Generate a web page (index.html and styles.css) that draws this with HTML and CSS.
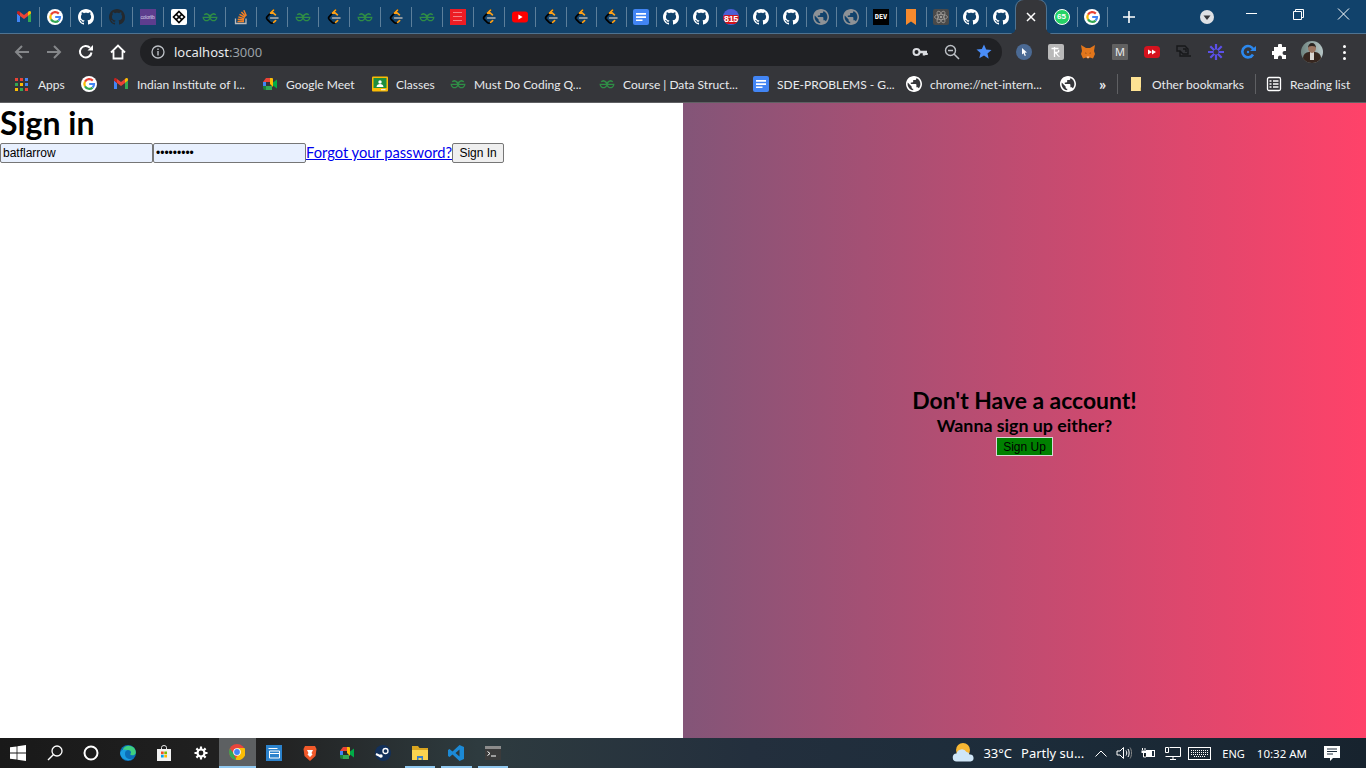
FILE: index.html
```html
<!DOCTYPE html>
<html lang="en">
<head>
<meta charset="utf-8">
<title>localhost:3000</title>
<link rel="stylesheet" href="styles.css">
</head>
<body>
<svg class="defs" width="0" height="0">
  <symbol id="gh" viewBox="0 0 16 16"><path fill="#fff" d="M8 0C3.58 0 0 3.58 0 8c0 3.54 2.29 6.53 5.47 7.59.4.07.55-.17.55-.38 0-.19-.01-.82-.01-1.49-2.01.37-2.53-.49-2.69-.94-.09-.23-.48-.94-.82-1.13-.28-.15-.68-.52-.01-.53.63-.01 1.08.58 1.23.82.72 1.21 1.87.87 2.33.66.07-.52.28-.87.51-1.07-1.78-.2-3.64-.89-3.64-3.95 0-.87.31-1.59.82-2.15-.08-.2-.36-1.02.08-2.12 0 0 .67-.21 2.2.82.64-.18 1.32-.27 2-.27s1.36.09 2 .27c1.53-1.04 2.2-.82 2.2-.82.44 1.1.16 1.92.08 2.12.51.56.82 1.27.82 2.15 0 3.07-1.87 3.75-3.65 3.95.29.25.54.73.54 1.48 0 1.07-.01 1.93-.01 2.2 0 .21.15.46.55.38A8.01 8.01 0 0 0 16 8c0-4.42-3.58-8-8-8z"/></symbol>
  <symbol id="ghd" viewBox="0 0 16 16"><path fill="#24292e" d="M8 0C3.58 0 0 3.58 0 8c0 3.54 2.29 6.53 5.47 7.59.4.07.55-.17.55-.38 0-.19-.01-.82-.01-1.49-2.01.37-2.53-.49-2.69-.94-.09-.23-.48-.94-.82-1.13-.28-.15-.68-.52-.01-.53.63-.01 1.08.58 1.23.82.72 1.21 1.87.87 2.33.66.07-.52.28-.87.51-1.07-1.78-.2-3.64-.89-3.64-3.95 0-.87.31-1.59.82-2.15-.08-.2-.36-1.02.08-2.12 0 0 .67-.21 2.2.82.64-.18 1.32-.27 2-.27s1.36.09 2 .27c1.53-1.04 2.2-.82 2.2-.82.44 1.1.16 1.92.08 2.12.51.56.82 1.27.82 2.15 0 3.07-1.87 3.75-3.65 3.95.29.25.54.73.54 1.48 0 1.07-.01 1.93-.01 2.2 0 .21.15.46.55.38A8.01 8.01 0 0 0 16 8c0-4.42-3.58-8-8-8z"/></symbol>
  <symbol id="g" viewBox="0 0 16 16"><circle cx="8" cy="8" r="8" fill="#fff"/><path fill="none" stroke="#ea4335" stroke-width="2.2" d="M11.8 4.6A5 5 0 0 0 4 5.6"/><path fill="none" stroke="#fbbc05" stroke-width="2.2" d="M4 5.6a5 5 0 0 0 0 4.8"/><path fill="none" stroke="#34a853" stroke-width="2.2" d="M4 10.4a5 5 0 0 0 7.6 1.2"/><path fill="none" stroke="#4285f4" stroke-width="2.2" d="M11.6 11.6A5 5 0 0 0 13 8H8.2"/></symbol>
  <symbol id="gm" viewBox="0 0 16 16"><path fill="#4285f4" d="M1 13h3V7L1 4.5z"/><path fill="#34a853" d="M12 13h3V4.5L12 7z"/><path fill="#ea4335" d="M4 7V3l4 3 4-3v4L8 10z"/><path fill="#fbbc05" d="M12 3v4l3-2.500V3.500C15 2 13.200 1.400 12 3z"/><path fill="#c5221f" d="M4 3v4L1 4.500V3.500C1 2 2.800 1.400 4 3z"/></symbol>
  <symbol id="gfg" viewBox="0 0 16 16"><path fill="none" stroke="#2f8d46" stroke-width="1.300" d="M8 8.300H14.800A3.400 3.400 0 1 1 13.800 5.900M8 8.300H1.200A3.400 3.400 0 1 0 2.200 5.900M7.900 8.300C7 5 3.800 4.200 2.200 5.900M8.100 8.300C9 5 12.200 4.200 13.800 5.900"/></symbol>
  <symbol id="lc" viewBox="0 0 16 16"><path fill="none" stroke="#000" stroke-width="1.700" stroke-linecap="round" d="M9.500 1.200 3.200 7.600a2 2 0 0 0 0 2.700l3 3a2.500 2.500 0 0 0 3.400 0"/><path fill="none" stroke="#ffa116" stroke-width="1.700" stroke-linecap="round" d="M9.600 13.300l2-1.700M9.500 1.200l-3 3M6.500 4.200l2.600-.4 2.300 2"/><path stroke="#b3b3b3" stroke-width="1.500" stroke-linecap="round" d="M6.500 8.900H14"/></symbol>
  <symbol id="globe" viewBox="2 2 20 20"><path fill="currentColor" fill-rule="evenodd" d="M12 2C6.48 2 2 6.48 2 12s4.48 10 10 10 10-4.48 10-10S17.52 2 12 2zm-1 17.93c-3.95-.49-7-3.85-7-7.930 0-.62.08-1.210.21-1.790L9 15v1c0 1.100.9 2 2 2v1.930zm6.900-2.540c-.26-.81-1-1.390-1.900-1.390h-1v-3c0-.55-.45-1-1-1H8v-2h2c.55 0 1-.45 1-1V7h2c1.100 0 2-.9 2-2v-.41c2.930 1.190 5 4.060 5 7.410 0 2.080-.8 3.970-2.100 5.390z"/></symbol>
  <symbol id="docs" viewBox="0 0 16 16"><rect width="16" height="16" rx="2" fill="#4285f4"/><path fill="#fff" d="M3 4h10v1.700H3zM3 7.200h10v1.700H3zM3 10.400h6.500v1.700H3z"/></symbol>
</svg>

<div class="tabstrip">
  <div class="tab first"><svg class="fav"><use href="#gm"/></svg></div>
  <div class="tab"><svg class="fav"><use href="#g"/></svg></div>
  <div class="tab"><svg class="fav"><use href="#gh"/></svg></div>
  <div class="tab"><svg class="fav"><use href="#ghd"/></svg></div>
  <div class="tab"><div class="fav colorlib">colorlib</div></div>
  <div class="tab"><div class="fav codepen"><svg viewBox="0 0 16 16"><path fill="none" stroke="#000" stroke-width="1.600" d="M8 2.500 13.500 8 8 13.500 2.500 8zM5 5.200 11 10.800M11 5.200 5 10.800"/></svg></div></div>
  <div class="tab"><svg class="fav"><use href="#gfg"/></svg></div>
  <div class="tab"><svg class="fav" viewBox="0 0 16 16"><path fill="none" stroke="#bcbbbb" stroke-width="1.300" d="M2.500 9.500V14.500H13V9.500"/><path stroke="#f48024" stroke-width="1.500" d="M4.500 12.600h6.500M4.700 10.300l6.300.7M5.300 7.900l6 1.800M6.500 5.300l5.500 3M8.400 3l4.200 4.500M10.800 1.200l2.500 5.600"/></svg></div>
  <div class="tab"><svg class="fav"><use href="#lc"/></svg></div>
  <div class="tab"><svg class="fav"><use href="#gfg"/></svg></div>
  <div class="tab"><svg class="fav"><use href="#lc"/></svg></div>
  <div class="tab"><svg class="fav"><use href="#gfg"/></svg></div>
  <div class="tab"><svg class="fav"><use href="#lc"/></svg></div>
  <div class="tab"><svg class="fav"><use href="#gfg"/></svg></div>
  <div class="tab"><div class="fav redbook"><span></span><span></span><span></span></div></div>
  <div class="tab"><svg class="fav"><use href="#lc"/></svg></div>
  <div class="tab"><svg class="fav" viewBox="0 0 16 16"><rect y="2.500" width="16" height="11" rx="3" fill="#f00"/><path fill="#fff" d="M6.400 5.600 10.600 8 6.400 10.400z"/></svg></div>
  <div class="tab"><svg class="fav"><use href="#lc"/></svg></div>
  <div class="tab nr"><svg class="fav"><use href="#lc"/></svg></div>
  <div class="tab nr"><svg class="fav"><use href="#lc"/></svg></div>
  <div class="tab nr"><svg class="fav"><use href="#docs"/></svg></div>
  <div class="tab nr"><svg class="fav"><use href="#gh"/></svg></div>
  <div class="tab nr"><svg class="fav"><use href="#gh"/></svg></div>
  <div class="tab nr"><div class="fav badge"><b>815</b></div></div>
  <div class="tab nr"><svg class="fav"><use href="#gh"/></svg></div>
  <div class="tab nr"><svg class="fav"><use href="#gh"/></svg></div>
  <div class="tab nr"><svg class="fav grey"><use href="#globe"/></svg></div>
  <div class="tab nr"><svg class="fav grey"><use href="#globe"/></svg></div>
  <div class="tab nr"><div class="fav dev">DEV</div></div>
  <div class="tab nr"><svg class="fav" viewBox="0 0 16 16"><path fill="#f58a2e" d="M3 0h10v16l-5-3.500L3 16z"/></svg></div>
  <div class="tab nr"><div class="fav react"><svg viewBox="0 0 16 16"><g fill="none" stroke="#a09c98" stroke-width=".8"><ellipse cx="8" cy="8" rx="6.500" ry="2.600"/><ellipse cx="8" cy="8" rx="6.500" ry="2.600" transform="rotate(60 8 8)"/><ellipse cx="8" cy="8" rx="6.500" ry="2.600" transform="rotate(120 8 8)"/></g><circle cx="8" cy="8" r="1.300" fill="#a09c98"/></svg></div></div>
  <div class="tab nr"><svg class="fav"><use href="#gh"/></svg></div>
  <div class="tab nr last"><svg class="fav"><use href="#gh"/></svg></div>
  <div class="tab active"><svg class="close" viewBox="0 0 10 10"><path stroke="#fff" stroke-width="1.500" d="M1 1l8 8M9 1l-8 8"/></svg></div>
  <div class="tab wa"><div class="fav whatsapp"><b>65</b></div></div>
  <div class="tab nr wide"><svg class="fav"><use href="#g"/></svg></div>
  <svg class="newtab" viewBox="0 0 12 12"><path stroke="#fff" stroke-width="1.600" d="M6 0v12M0 6h12"/></svg>
  <div class="search-tabs"><svg viewBox="0 0 14 14"><circle cx="7" cy="7" r="7" fill="#dfe1e5"/><path fill="#35363a" d="M3.500 5.500h7L7 10z"/></svg></div>
  <div class="winctl">
    <svg viewBox="0 0 46 20"><path stroke="#fff" d="M18 9.500h11"/></svg>
    <svg viewBox="0 0 46 20"><path fill="none" stroke="#fff" d="M19.500 7.500h8v8h-8zM21.500 7.500v-2h8v8h-2"/></svg>
    <svg viewBox="0 0 46 20"><path stroke="#fff" d="M18 4.500l11 11M29 4.500l-11 11"/></svg>
  </div>
</div>

<div class="toolbar">
  <svg class="nav" viewBox="0 0 16 16"><path fill="none" stroke="#85878a" stroke-width="2" d="M15 8H2M8 2 2 8l6 6"/></svg>
  <svg class="nav" viewBox="0 0 16 16"><path fill="none" stroke="#85878a" stroke-width="2" d="M1 8h13M8 2l6 6-6 6"/></svg>
  <svg class="nav" viewBox="0 0 16 16"><path fill="none" stroke="#fff" stroke-width="2" d="M13.500 8.500A5.800 5.800 0 1 1 12 3.800"/><path fill="#fff" d="M9.500 6.500H15V1z"/></svg>
  <svg class="nav" viewBox="0 0 16 16"><path fill="none" stroke="#fff" stroke-width="1.800" d="M1 8.500 8 1.500l7 7M3.500 7v7.500h9V7"/></svg>
  <div class="omnibox">
    <svg class="info" viewBox="0 0 14 14"><circle cx="7" cy="7" r="6" fill="none" stroke="#bdc1c6" stroke-width="1.300"/><path stroke="#bdc1c6" stroke-width="1.400" d="M7 6v4.500M7 3.500V5"/></svg>
    <span class="url">localhost<span class="port">:3000</span></span>
    <div class="omni-right">
      <svg viewBox="0 0 16 16"><circle cx="4.500" cy="8" r="3" fill="none" stroke="#dadce0" stroke-width="2"/><path stroke="#dadce0" stroke-width="2.500" d="M7 8h8M12 9v2.500M14.500 9v2"/></svg>
      <svg viewBox="0 0 16 16"><circle cx="6.500" cy="6.500" r="5" fill="none" stroke="#bdc1c6" stroke-width="1.400"/><path stroke="#bdc1c6" stroke-width="1.500" d="M10 10l5 5M4 6.500h5"/></svg>
      <svg viewBox="0 0 16 16"><path fill="#4a8df8" d="M8 .5l2.200 5 5.300.5-4 3.500 1.200 5.300L8 11.500l-4.700 2.800 1.200-5.300-4-3.500 5.300-.5z"/></svg>
    </div>
  </div>
  <div class="exts">
    <svg viewBox="0 0 16 16"><circle cx="8" cy="8" r="8" fill="#4b6a94"/><path fill="#fff" d="M6 4l5 4.500-2.300.3 1.200 2.600-1.200.5-1.100-2.600L6 10.500z"/></svg>
    <svg viewBox="0 0 16 16"><rect width="16" height="16" rx="2" fill="#b9b9b9"/><path fill="none" stroke="#fff" stroke-width="1.300" d="M3.500 4.500h7M6.500 3v10M6.500 8.500c3 0 5-.5 4-2.500M7 8.500c2 0 2.500 4.500 4.500 3.800"/></svg>
    <svg viewBox="0 0 16 16"><path fill="#e2761b" d="M1 1l5 3h4l5-3-1 6 1 3-2 4.500-3-1-2 1-2-1-3 1L1 10l1-3z"/><path fill="#763d16" d="M5 8.500l1.500.5L6 10zM11 8.500 9.500 9l.5 1z"/><path fill="#f6c7a1" d="M6.500 12.500h3L8 14.500z"/></svg>
    <div class="ext-m">M</div>
    <svg viewBox="0 0 16 16"><rect y="2" width="16" height="12" rx="3.500" fill="#d5121e"/><path fill="#fff" d="M4 5.500 8 8l-4 2.500zM8 5.500 12 8l-4 2.500z"/></svg>
    <svg viewBox="0 0 16 16"><g fill="none" stroke="#17181a" stroke-width="1.400"><path d="M1 2h8l3 3v5H7L4 7H1zM4 7v5h11"/><path d="M7 5h3v3"/></g></svg>
    <svg viewBox="0 0 16 16"><g stroke="#5b50e8" stroke-width="2.200"><path d="M8 0v16M0 8h16M2.300 2.300l11.400 11.400M13.700 2.300 2.300 13.700"/></g><circle cx="8" cy="8" r="2.500" fill="#35363a"/></svg>
    <svg viewBox="0 0 16 16"><path fill="none" stroke="#2c88ed" stroke-width="2.600" d="M13 10.500A5.700 5.700 0 1 1 13.500 6"/><path fill="#2c88ed" d="M10 7H16V2z"/><circle cx="8" cy="8" r="1.200" fill="#2c88ed"/></svg>
    <svg viewBox="0 0 16 16"><path fill="#fff" d="M6 1.500a2 2 0 0 1 4 0V3h4v4h-1.500a2 2 0 0 0 0 4H14v4h-4v-1.500a2 2 0 0 0-4 0V15H2v-4H.8a2 2 0 0 1 0-4H2V3h4z"/></svg>
  </div>
  <div class="avatar"><span class="suit"></span><span class="shirt"></span><span class="head"></span></div>
  <div class="kebab"><i></i><i></i><i></i></div>
</div>

<div class="bookmarks">
  <div class="bm apps"><div class="grid9"><i class="r"></i><i class="r"></i><i class="b"></i><i class="g"></i><i class="y"></i><i class="b"></i><i class="y"></i><i class="g"></i><i class="r"></i></div>Apps</div>
  <div class="bm solo"><svg class="bi"><use href="#g"/></svg></div>
  <div class="bm iit"><svg class="bi"><use href="#gm"/></svg>Indian Institute of I...</div>
  <div class="bm meet"><svg class="bi" viewBox="0 0 16 16"><path fill="#ea4335" d="M4 2h6v4H1z"/><path fill="#4285f4" d="M1 6h3v4H1z"/><path fill="#188038" d="M1 10h3v4H3a2 2 0 0 1-2-2z"/><path fill="#34a853" d="M4 10h6v4H4z"/><path fill="#fbbc05" d="M10 2a1 1 0 0 1 1 1v8L8 8V2z"/><path fill="#00ac47" d="M11 6.500l4-3v9l-4-3z"/></svg>Google Meet</div>
  <div class="bm cls"><svg class="bi" viewBox="0 0 16 16"><rect width="16" height="15" y=".5" rx="1" fill="#fbbc04"/><rect x="1.500" y="2" width="13" height="10" fill="#1e8e3e"/><circle cx="8" cy="6" r="1.700" fill="#fff"/><path fill="#fff" d="M4.500 11c0-4 7-4 7 0z"/><path fill="#e8eaed" d="M9 13h4.500v1.200H9z"/></svg>Classes</div>
  <div class="bm must"><svg class="bi"><use href="#gfg"/></svg>Must Do Coding Q...</div>
  <div class="bm course"><svg class="bi"><use href="#gfg"/></svg>Course | Data Struct...</div>
  <div class="bm sde"><svg class="bi"><use href="#docs"/></svg>SDE-PROBLEMS - G...</div>
  <div class="bm net"><svg class="bi white"><use href="#globe"/></svg>chrome://net-intern...</div>
  <div class="bm solo2"><svg class="bi white"><use href="#globe"/></svg></div>
  <div class="more">»</div>
  <div class="vsep sep-a"></div>
  <div class="bm other"><svg class="bi" viewBox="0 0 16 16"><path fill="#fde293" d="M3 1h7l1.500 1.500V14l-1 1H3z"/><path fill="#fde293" d="M10 1l3 0v14h-3z"/><path fill="#e5c36a" d="M12 11.500l1 0v3.500h-1z"/></svg>Other bookmarks</div>
  <div class="vsep sep-b"></div>
  <div class="bm reading"><svg class="bi" viewBox="0 0 16 16"><rect x="1.500" y="1.500" width="13" height="13" rx="1.500" fill="none" stroke="#fff" stroke-width="1.300"/><path stroke="#fff" stroke-width="1.300" d="M3.500 5h2M7 5h5.500M3.500 8h2M7 8h5.500M3.500 11h2M7 11h5.500"/></svg>Reading list</div>
</div>

<main class="page">
  <section class="signin">
    <h1>Sign in</h1>
    <form class="form">
      <input type="text" value="batflarrow"><input type="password" value="batflarro"><a href="#">Forgot your password?</a><button type="button">Sign In</button>
    </form>
  </section>
  <section class="promo">
    <h2>Don't Have a account!</h2>
    <h3>Wanna sign up either?</h3>
    <button type="button">Sign Up</button>
  </section>
</main>

<footer class="taskbar">
  <div class="tb-icon"><svg viewBox="0 0 16 16"><path fill="#fff" d="M0 2.300 6.600 1.400V7.600H0zM7.400 1.300 16 0V7.600H7.400zM0 8.400H6.600V14.600L0 13.700zM7.400 8.400H16V16L7.400 14.700z"/></svg></div>
  <div class="tb-icon"><svg viewBox="0 0 16 16"><circle cx="10" cy="6" r="5" fill="none" stroke="#fff" stroke-width="1.300"/><path stroke="#fff" stroke-width="1.500" d="M6.500 9.500 1 15"/></svg></div>
  <div class="tb-icon"><svg viewBox="0 0 16 16"><circle cx="8" cy="8" r="6.500" fill="none" stroke="#fff" stroke-width="2"/></svg></div>
  <div class="tb-icon"><svg viewBox="0 0 16 16"><circle cx="8" cy="8" r="8" fill="#0c6fb8"/><path fill="#3fd07f" d="M3 4a7 7 0 0 1 12.800 3C16 11 11 11 10 9c2-1 1-4-2-4-2 0-4 1-5 3z"/><path fill="#1a9ee2" d="M5 9c0 4 4 6 8 4.500A8 8 0 0 1 .1 8C1 4 5 4 7 5 5 6 5 8 5 9z"/></svg></div>
  <div class="tb-icon"><svg viewBox="0 0 16 16"><path fill="none" stroke="#e8e8e8" stroke-width="1" d="M5.500 4V2.500a2.500 2 0 0 1 5 0V4"/><path fill="#f1f1f1" d="M1 4h14v12H1z"/><path fill="#f25022" d="M5 6.500h2.700v2.700H5z"/><path fill="#7fba00" d="M8.300 6.500H11v2.700H8.300z"/><path fill="#00a4ef" d="M5 9.800h2.700v2.700H5z"/><path fill="#ffb900" d="M8.300 9.800H11v2.700H8.300z"/></svg></div>
  <div class="tb-icon"><svg viewBox="0 0 16 16"><circle cx="8" cy="8" r="3.500" fill="none" stroke="#fff" stroke-width="2.200"/><path stroke="#fff" stroke-width="2.200" d="M8 1.500v2.500M8 12v2.500M1.500 8H4M12 8h2.500M3.400 3.400l1.800 1.800M10.800 10.800l1.800 1.800M12.600 3.400l-1.800 1.800M5.200 10.800l-1.800 1.800"/></svg></div>
  <div class="tb-icon running"><svg viewBox="0 0 16 16"><circle cx="8" cy="8" r="8" fill="#e8453c"/><path fill="#f9bc05" d="M8 4h7.500A8 8 0 0 1 6 15.700L10 9z"/><path fill="#34a853" d="M.9 4.500 5 10l-.2.400 2.600 5.600A8 8 0 0 1 .9 4.500z"/><circle cx="8" cy="8" r="3.800" fill="#fff"/><circle cx="8" cy="8" r="2.900" fill="#4285f4"/></svg></div>
  <div class="tb-icon"><svg viewBox="0 0 16 16"><rect width="16" height="16" fill="#2b82cc"/><path fill="none" stroke="#fff" stroke-width="1" d="M2.500 3.500h9M3.500 6h10v7h-10zM3.500 8.500h10"/></svg></div>
  <div class="tb-icon"><svg viewBox="0 0 16 16"><path fill="#f1592a" d="M3 1h10l1.500 3-1 7L8 16l-5.500-5-1-7z"/><path fill="#fff" d="M5 5h6l-1.500 3 1 1.500L8 12 5.500 9.500l1-1.500z"/></svg></div>
  <div class="tb-icon"><svg viewBox="0 0 16 16"><path fill="#ea4335" d="M4 2h6v4H1z"/><path fill="#4285f4" d="M1 6h3v4H1z"/><path fill="#188038" d="M1 10h3v4H3a2 2 0 0 1-2-2z"/><path fill="#34a853" d="M4 10h6v4H4z"/><path fill="#fbbc05" d="M10 2a1 1 0 0 1 1 1v8L8 8V2z"/><path fill="#00ac47" d="M11 6.500l4-3v9l-4-3z"/></svg></div>
  <div class="tb-icon"><svg viewBox="0 0 16 16"><circle cx="8" cy="8" r="8" fill="#12305a"/><circle cx="10.500" cy="6" r="2.500" fill="none" stroke="#fff" stroke-width="1.300"/><path stroke="#fff" stroke-width="2" d="M1 9l5 2.500"/><circle cx="6" cy="11" r="1.700" fill="#fff"/></svg></div>
  <div class="tb-icon open"><svg viewBox="0 0 16 16"><path fill="#d9a520" d="M0 1h6l1.500 2H16v3H0z"/><path fill="#fbd44f" d="M0 5h16v10H0z"/><path fill="#3a7fc4" d="M5 11h6v4H9.500v-2h-3v2H5z"/></svg></div>
  <div class="tb-icon open"><svg viewBox="0 0 16 16"><path fill="#1c8ad6" d="M11.500 0 16 2v12l-4.500 2L4.500 9.500 1.500 12 0 11V5l1.500-1 3 2.500zM11.500 4.500 7.500 8l4 3.500z"/></svg></div>
  <div class="tb-icon open"><svg viewBox="0 0 16 16"><rect y="1" width="16" height="14" fill="#3b3b3b"/><rect y="1" width="16" height="3" fill="#8c8c8c"/><path fill="none" stroke="#fff" d="M2.500 6.500 5 8.500 2.500 10.500"/><path stroke="#fff" d="M6 11h5"/></svg></div>
  <div class="tray">
    <svg class="weather" viewBox="0 0 22 22"><circle cx="11" cy="8" r="7" fill="#f7b733"/><path fill="#cfe6f7" d="M5 19.500a4 4 0 0 1-.5-8A5.500 5.500 0 0 1 14.500 10a3 3 0 0 1 3 2.500 3.500 3.500 0 0 1 1 7z"/></svg>
    <span class="temp">33°C</span>
    <span class="wtext">Partly su...</span>
    <svg class="t-up" viewBox="0 0 12 7"><path fill="none" stroke="#fff" d="M.5 6.500 6 1l5.500 5.500"/></svg>
    <svg class="t-vol" viewBox="0 0 16 14"><path fill="none" stroke="#fff" d="M1 5h3l3.500-3.500v11L4 9H1zM10 4.500c1 1.500 1 3.500 0 5M12 3c1.500 2 1.500 6 0 8"/><path fill="none" stroke="#888" d="M14 1.500c2 2.500 2 8.500 0 11"/></svg>
    <svg class="t-bat" viewBox="0 0 16 12"><path fill="#fff" d="M6 3h9v7H6zM2 1h1v2H2zM4.500 1h1v2h-1zM1.500 3.500h4.500v2.500H1.500z"/><path fill="#1c2c3a" d="M12 4h2v5h-2z"/><path stroke="#fff" d="M3.500 6v4H6"/></svg>
    <svg class="t-net" viewBox="0 0 16 14"><path fill="none" stroke="#fff" d="M4.500 1.500H15.500V10.500H.5M8 10.500v3M5 13.500h6M.5 1.500h3v5h-3z"/></svg>
    <svg class="t-kbd" viewBox="0 0 23 13"><rect x=".5" y=".5" width="22" height="12" fill="none" stroke="#fff"/><path stroke="#fff" stroke-dasharray="1 1" d="M3 3.500h17M3 5.500h17M3 7.500h17M6 9.500h11"/></svg>
    <span class="lang">ENG</span>
    <span class="clock">10:32 AM</span>
    <svg class="t-notif" viewBox="0 0 16 15"><path fill="#fff" d="M0 0h16v12H9l-3 3v-3H0z"/><path stroke="#1c2c3a" d="M3 3h10M3 5.500h10M3 8h6"/></svg>
  </div>
</footer>
</body>
</html>
```

FILE: styles.css
```css
* { box-sizing: border-box; }
html, body { margin: 0; padding: 0; height: 768px; overflow: hidden; }
body { display: flex; flex-direction: column; width: 1366px; font-family: "Noto Sans", "Open Sans", sans-serif; background: #fff; }
.defs { position: absolute; }

/* Tab strip */
.tabstrip { height: 34px; flex: none; display: flex; align-items: center; padding-left: 8px; background: #11426b; border-bottom: 1px solid #4f7391; }
.tab { width: 31px; height: 33px; flex: none; display: flex; align-items: center; justify-content: center; position: relative; }
.tab.nr { width: 30px; }
.tab::after { content: ""; position: absolute; right: -1px; top: 7px; height: 20px; width: 1px; background: #5c7f9b; }
.tab.last::after { display: none; }
.fav { width: 16px; height: 16px; display: block; flex: none; }
.fav.grey { color: #8e9296; }
.colorlib { background: #5d3d8e; color: #d8cfe6; font: 5px/16px "Liberation Sans", sans-serif; text-align: center; overflow: hidden; letter-spacing: -.2px; }
.codepen { background: #fff; border-radius: 2px; }
.codepen svg, .react svg { display: block; width: 16px; height: 16px; }
.redbook { background: #ed1c24; display: flex; flex-direction: column; align-items: center; justify-content: center; gap: 3px; }
.redbook span { display: block; width: 9px; height: 1px; background: #f47f84; }
.badge { background: #4c5fd5; border-radius: 8px; position: relative; overflow: hidden; }
.badge b { position: absolute; left: 0; right: 0; bottom: 1px; background: #d0141c; color: #fff; font: bold 9px/9px "Liberation Sans", sans-serif; letter-spacing: -.3px; text-align: center; border-radius: 2px; }
.dev { background: #000; color: #fff; font: bold 7px/16px "DejaVu Sans Mono", monospace; text-align: center; }
.react { background: #4a4a4a; border-radius: 2px; }
.tab.active { width: 30px; background: #35363a; border-radius: 8px 8px 0 0; height: 34px; margin-top: 1px; z-index: 1; box-shadow: 0 -1px 0 #4f7391, -1px 0 0 #4f7391, 1px 0 0 #4f7391; }
.tab.active::before, .tab.active::after { content: ""; position: absolute; top: auto; bottom: 0; width: 6px; height: 6px; }
.tab.active::before { left: -6px; background: radial-gradient(circle at 0 0, transparent 5.500px, #35363a 6px); }
.tab.active::after { right: -6px; background: radial-gradient(circle at 100% 0, transparent 5.500px, #35363a 6px); }
.close { width: 10px; height: 10px; }
.tab.wa { width: 31px; }
.whatsapp { background: #25d366; border-radius: 50%; border: 1.500px solid #fff; color: #fff; font: bold 8px/13px "Liberation Sans", sans-serif; text-align: center; }
.newtab { width: 12px; height: 12px; margin-left: 16px; flex: none; }
.search-tabs { width: 14px; height: 14px; margin-left: 65px; flex: none; }
.search-tabs svg { display: block; width: 14px; height: 14px; }
.winctl { margin-left: auto; display: flex; align-self: flex-start; padding-top: 4px; }
.winctl svg { width: 46px; height: 20px; display: block; }

/* Toolbar */
.toolbar { height: 33px; flex: none; display: flex; align-items: center; padding: 3px 0 0 14px; background: #35363a; }
.nav { width: 16px; height: 16px; margin-right: 16px; flex: none; }
.omnibox { width: 862px; height: 28px; margin-left: -2px; border-radius: 14px; background: #202124; display: flex; align-items: center; padding: 0 10px 0 11px; flex: none; }
.info { width: 14px; height: 14px; flex: none; }
.url { margin-left: 9px; font-size: 13px; color: #e8eaed; }
.port { color: #9aa0a6; }
.omni-right { margin-left: auto; display: flex; gap: 16px; align-items: center; }
.omni-right svg { width: 16px; height: 16px; display: block; }
.exts { display: flex; gap: 16px; margin-left: 14px; flex: none; }
.exts svg, .ext-m { width: 16px; height: 16px; display: block; flex: none; }
.ext-m { background: #616161; color: #e8eaed; font: 11px/16px "Noto Sans", sans-serif; text-align: center; border-radius: 1px; }
.avatar { width: 22px; height: 22px; margin-left: 13px; border-radius: 50%; background: linear-gradient(to right, #6e8480, #b7c6c6); position: relative; overflow: hidden; flex: none; }
.head { position: absolute; left: 7px; top: 2px; width: 8px; height: 10px; border-radius: 50%; background: #9a7460; border-top: 3px solid #2a2320; }
.suit { position: absolute; left: 2px; top: 11px; width: 18px; height: 12px; border-radius: 6px 6px 0 0; background: #36261f; }
.shirt { position: absolute; left: 9px; top: 11px; width: 4px; height: 8px; background: #d9d6d2; }
.kebab { margin-left: 20px; display: flex; flex-direction: column; gap: 3px; flex: none; }
.kebab i { display: block; width: 3px; height: 3px; border-radius: 50%; background: #fff; }

/* Bookmarks */
.bookmarks { height: 36px; flex: none; display: flex; align-items: center; padding: 0 0 1px 15px; background: #35363a; border-bottom: 1px solid #5f6063; font-family: Lato, "Noto Sans", sans-serif; font-size: 12px; color: #e8eaed; }
.bm { display: flex; align-items: center; gap: 8px; flex: none; white-space: nowrap; }
.bi { width: 16px; height: 16px; flex: none; }
.bi.white { color: #fff; }
.grid9 { display: grid; grid-template-columns: repeat(3, 3px); grid-auto-rows: 3px; gap: 2px; width: 13px; margin-right: 2px; }
.grid9 i { display: block; }
.grid9 .r { background: #ea4335; } .grid9 .b { background: #4285f4; } .grid9 .g { background: #34a853; } .grid9 .y { background: #fbbc05; }
.apps { width: 66px; }
.solo { width: 32px; }
.iit { width: 149px; }
.meet { width: 110px; }
.cls { width: 78px; }
.must { width: 149px; }
.course { width: 154px; }
.sde { width: 153px; }
.net { width: 154px; }
.solo2 { width: 39px; }
.more { width: 12px; color: #e8eaed; font-size: 16px; font-weight: 700; line-height: 14px; flex: none; }
.vsep { width: 1px; height: 20px; background: #5f6063; flex: none; }
.sep-a { margin: 0 10px 0 6px; }
.sep-b { margin: 0 10px; }
.other { width: 117px; }

/* Page */
.page { flex: 1; min-height: 0; display: grid; grid-template-columns: 683px 683px; font-family: Lato, "Noto Sans", sans-serif; color: #000; }
.signin { background: #fff; min-width: 0; }
.signin h1 { margin: 0; font-size: 32px; line-height: 40px; font-weight: 700; }
.form { display: flex; align-items: center; height: 20px; }
.form input { width: 153px; height: 20px; padding: 1px 2px; margin: 0; background: #e8f0fe; border: 1px solid #767676; border-radius: 2px; font: 12px "Liberation Sans", sans-serif; color: #000; }
.form a { color: #0000ee; font-size: 14.700px; line-height: 18px; margin-bottom: 2px; text-decoration: underline; white-space: nowrap; }
.form button { width: 52px; height: 20px; padding: 0; background: #efefef; border: 1px solid #767676; border-radius: 2px; font: 12px "Liberation Sans", sans-serif; color: #000; }
.promo { background: linear-gradient(to right, #835578, #ff4269); display: flex; flex-direction: column; align-items: center; justify-content: center; padding-bottom: 1px; }
.promo h2 { margin: 0; font-size: 22.900px; line-height: 32px; font-weight: 700; }
.promo h3 { margin: 0 0 2px; font-size: 17.800px; line-height: 19px; font-weight: 700; }
.promo button { width: 57px; height: 19px; padding: 1px 0 0; background: #008000; border: 1px solid #d8d8d8; border-radius: 0; font: 12px "Liberation Sans", sans-serif; color: #000; }

/* Taskbar */
.taskbar { height: 30px; flex: none; display: flex; align-items: stretch; background: linear-gradient(to right, #191919 0, #222 20%, #2e3b3f 35%, #232f3d 55%, #1c2c3a 75%, #17232e 100%); color: #fff; font-size: 13px; }
.tb-icon { width: 36.500px; display: flex; align-items: center; justify-content: center; flex: none; position: relative; }
.tb-icon svg { width: 16px; height: 16px; display: block; }
.running { background: #5d6062; border-bottom: 2px solid #90c8f0; }
.open::after { content: ""; position: absolute; left: 3px; right: 3px; bottom: 0; height: 2px; background: #90c8f0; }
.tray { margin-left: auto; display: flex; align-items: center; flex: none; padding-right: 26px; }
.weather { width: 22px; height: 22px; margin-right: 9px; }
.temp { margin-right: 9px; font-size: 13px; }
.wtext { margin-right: 11px; font-size: 13px; }
.t-up { width: 12px; height: 7px; margin-right: 9px; }
.t-vol { width: 16px; height: 14px; margin-right: 8px; }
.t-bat { width: 16px; height: 12px; margin-right: 9px; }
.t-net { width: 16px; height: 14px; margin-right: 7px; }
.t-kbd { width: 23px; height: 13px; margin-right: 11px; }
.lang { font-size: 11px; margin-right: 12px; }
.clock { font-size: 11.500px; margin-right: 17px; }
.t-notif { width: 16px; height: 15px; }
```
